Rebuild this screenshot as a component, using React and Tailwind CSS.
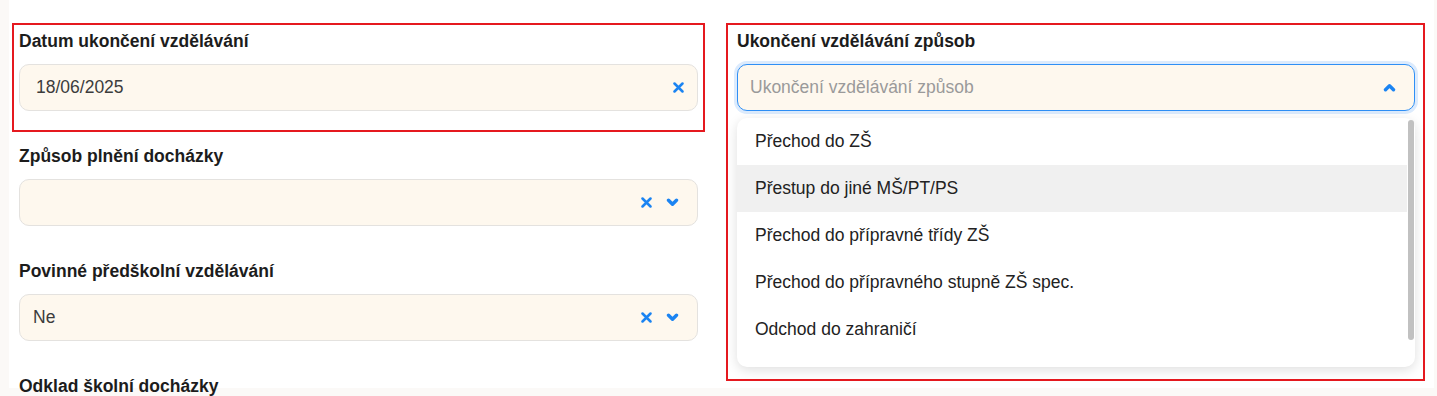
import React from "react";

const ClearIcon = () => (
  <svg width="11" height="11" viewBox="0 0 11 11" className="shrink-0">
    <path d="M1.5 1.5 L9.5 9.5 M9.5 1.5 L1.5 9.5" stroke="#1b84f2" strokeWidth="2.5" strokeLinecap="round" />
  </svg>
);

const Chevron = ({ up }) => (
  <svg width="13" height="9" viewBox="0 0 13 9" className="shrink-0">
    <path
      d={up ? "M2.5 6.8 L6.5 2.8 L10.5 6.8" : "M2.5 2.2 L6.5 6.2 L10.5 2.2"}
      fill="none"
      stroke="#1b84f2"
      strokeWidth="3.4"
      strokeLinecap="round"
      strokeLinejoin="round"
    />
  </svg>
);

const Label = ({ children }) => (
  <div className="text-[17.5px] leading-6 font-bold text-[#1c1c1c] mb-[11px]">{children}</div>
);

const SelectField = ({ label, value }) => (
  <div className="mb-[33px]">
    <Label>{label}</Label>
    <div className="h-[47px] rounded-[10px] border border-[#e4e2df] bg-[#fef8ee] flex items-center pl-[13px] pr-[18px]">
      <span className="flex-1 text-[17.5px] text-[#3c3c3c]">{value}</span>
      <div className="flex items-center gap-[14px]">
        <ClearIcon />
        <Chevron />
      </div>
    </div>
  </div>
);

const options = [
  "Přechod do ZŠ",
  "Přestup do jiné MŠ/PT/PS",
  "Přechod do přípravné třídy ZŠ",
  "Přechod do přípravného stupně ZŠ spec.",
  "Odchod do zahraničí",
];

export default function App() {
  return (
    <div className="h-[396px] overflow-hidden bg-[#fbf9f7] pl-[9px] pr-[3px] pb-[8px] font-['Liberation_Sans',Arial,sans-serif]">
      <div className="h-full bg-white pt-[29px] pl-[10px] grid grid-cols-[679px_678px] gap-x-[39px] items-start">
        {/* levý sloupec */}
        <div>
          <div className="relative mb-[33px]">
            <div className="pointer-events-none absolute -left-[7px] -right-[7px] -top-[6px] -bottom-[21px] border-2 border-[#e5191f]" />
            <Label>Datum ukončení vzdělávání</Label>
            <div className="h-[47px] rounded-[10px] border border-[#e4e2df] bg-[#fef8ee] flex items-center pl-[16px] pr-[13px]">
              <span className="flex-1 text-[17.5px] text-[#3c3c3c]">18/06/2025</span>
              <ClearIcon />
            </div>
          </div>
          <SelectField label="Způsob plnění docházky" value="" />
          <SelectField label="Povinné předškolní vzdělávání" value="Ne" />
          <Label>Odklad školní docházky</Label>
        </div>

        {/* pravý sloupec */}
        <div className="relative">
          <div className="pointer-events-none absolute -left-[11px] -right-[10px] -top-[6px] -bottom-[14px] border-2 border-[#e5191f]" />
          <Label>Ukončení vzdělávání způsob</Label>
          <div className="h-[47px] rounded-[10px] border border-[#2f8ff5] bg-[#fef8ee] ring-[3px] ring-[#dcebfd] flex items-center pl-[12px] pr-[18px]">
            <span className="flex-1 text-[17.5px] text-[#9a9a9a]">Ukončení vzdělávání způsob</span>
            <Chevron up />
          </div>
          <div className="relative mt-[7px] h-[249px] rounded-[10px] bg-white shadow-[0_3px_12px_rgba(0,0,0,0.13)] pr-[8px] pb-[14px]">
            {options.map((o, i) => (
              <div
                key={o}
                className={`h-[47px] flex items-center pl-[18px] text-[17.5px] text-[#222] ${i === 1 ? "bg-[#f0f0f0]" : ""}`}
              >
                {o}
              </div>
            ))}
            <div className="absolute right-[1px] top-[2px] w-[6px] h-[220px] rounded-full bg-[#c1c1c1]" />
          </div>
        </div>
      </div>
    </div>
  );
}
